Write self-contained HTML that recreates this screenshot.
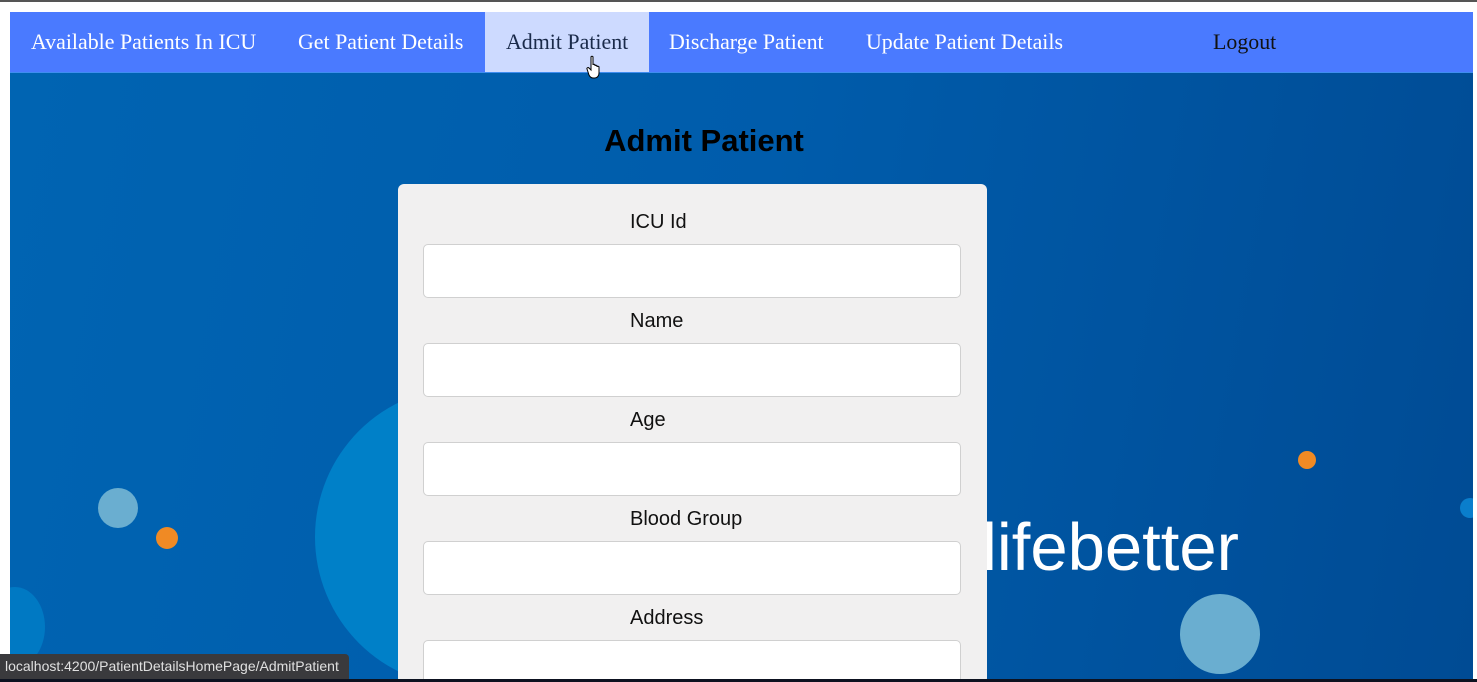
<!DOCTYPE html>
<html><head><meta charset="utf-8"><style>
*{margin:0;padding:0;box-sizing:border-box}
html,body{width:1477px;height:682px;overflow:hidden;background:#fff;position:relative;font-family:"Liberation Sans",sans-serif}
.topline{position:absolute;left:0;top:0;width:1477px;height:2px;background:#555}
.bg{position:absolute;left:10px;top:12px;width:1463px;height:667px;background:linear-gradient(100deg,#0064b2 0%,#005cab 50%,#004b94 100%);overflow:hidden}
.nav{position:absolute;left:10px;top:12px;width:1463px;height:61px;background:#4a7aff;border-bottom:1px solid #3f8df0}
.nav a{position:absolute;top:0;height:60px;line-height:60px;font-family:"Liberation Serif",serif;font-size:21.9px;color:#fff;text-decoration:none;white-space:nowrap}
.nav a.act{background:#cddaff;color:#1a2a4a;padding:0 21px}
.c{position:absolute;border-radius:50%}
h1{position:absolute;left:0;width:1408px;text-align:center;top:123px;font-size:31px;font-weight:bold;color:#000}
.card{position:absolute;left:398px;top:184px;width:589px;height:500px;background:#f1f0f0;border-radius:6px}
.lbl{position:absolute;font-size:20px;color:#111}
.inp{position:absolute;left:25px;width:538px;height:54px;background:#fff;border:1px solid #d0d0d0;border-radius:5px}
.status{position:absolute;left:0;top:654px;width:349px;height:25px;background:#3a3a3d;border-top-right-radius:4px;color:#e0e0e0;font-size:14px;line-height:25px;padding-left:5px}
.bot{position:absolute;left:0;top:679px;width:1477px;height:3px;background:#0d1220}
</style></head><body>
<div class="topline"></div>
<div class="bg">
 <div class="c" style="left:305px;top:375px;width:300px;height:300px;background:#0080c8"></div>
 <div class="c" style="left:88px;top:476px;width:40px;height:40px;background:#6aaed0"></div>
 <div class="c" style="left:146px;top:515px;width:22px;height:22px;background:#f08a24"></div>
 <div class="c" style="left:-25px;top:575px;width:60px;height:80px;background:#0079c3"></div>
 <div class="c" style="left:1288px;top:439px;width:18px;height:18px;background:#f08a24"></div>
 <div class="c" style="left:1450px;top:486px;width:20px;height:20px;background:#0a7ecc"></div>
 <div class="c" style="left:1170px;top:582px;width:80px;height:80px;background:#6aaed0"></div>
 <div style="position:absolute;left:972px;top:496px;font-size:67px;line-height:80px;color:#fff;font-family:'Liberation Sans',sans-serif">lifebetter</div>
</div>
<div class="nav">
 <a style="left:21px">Available Patients In ICU</a>
 <a style="left:288px">Get Patient Details</a>
 <a class="act" style="left:475px">Admit Patient</a>
 <a style="left:659px">Discharge Patient</a>
 <a style="left:856px">Update Patient Details</a>
 <a style="left:1203px;color:#111">Logout</a>
</div>
<h1>Admit Patient</h1>
<div class="card">
 <div class="lbl" style="left:232px;top:27px">ICU Id</div>
 <div class="inp" style="top:60px"></div>
 <div class="lbl" style="left:232px;top:126px">Name</div>
 <div class="inp" style="top:159px"></div>
 <div class="lbl" style="left:232px;top:225px">Age</div>
 <div class="inp" style="top:258px"></div>
 <div class="lbl" style="left:232px;top:324px">Blood Group</div>
 <div class="inp" style="top:357px"></div>
 <div class="lbl" style="left:232px;top:423px">Address</div>
 <div class="inp" style="top:456px"></div>
</div>
<svg style="position:absolute;left:586px;top:55px" width="18" height="24" viewBox="0 0 18 24"><path d="M5 2c0-1 2-1 2 0v8c0-1 2-1 2 0v1c0-1 2-1 2 0v1c0-1 2-1 2 0v6c0 3-2 5-4 5H7c-2 0-3-1-4-3L1 14c-.5-1 1-2 2-1l2 2z" fill="#fff" stroke="#000" stroke-width="1"/></svg>
<div class="status">localhost:4200/PatientDetailsHomePage/AdmitPatient</div>
<div class="bot"></div>
</body></html>
